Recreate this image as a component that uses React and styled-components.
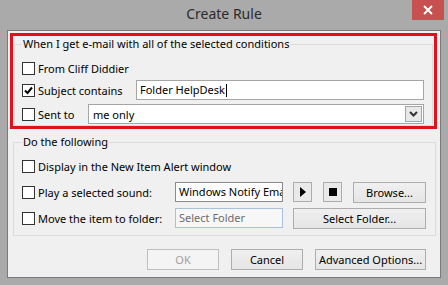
import React from "react";
import styled, { createGlobalStyle } from "styled-components";

const GlobalStyle = createGlobalStyle`
    html, body {
        margin: 0;
        padding: 0;
        background: #aaaaaa;
    }
    body {
        font-family: "Noto Sans", "Open Sans", sans-serif;
        font-size: 11px;
        color: #000;
    }
`;

const App = () => {
    return (
        <Window>
            <GlobalStyle />
            <TitleBar>
                <span />
                <Title>Create Rule</Title>
                <CloseButton>
                    <svg width="10" height="10" viewBox="0 0 10 10">
                        <path d="M1 1 L9 9 M9 1 L1 9" stroke="#fff" strokeWidth="2" />
                    </svg>
                </CloseButton>
            </TitleBar>
            <Client>
                <Highlight>
                    <Group $inset={7}>
                        <Legend>When I get e-mail with all of the selected conditions</Legend>
                        <Rows $gap={2}>
                            <Row>
                                <Check />
                                <Label>From Cliff Diddier</Label>
                            </Row>
                            <Row>
                                <Check checked />
                                <Label $w={98}>Subject contains</Label>
                                <TextBox>
                                    Folder HelpDesk<Caret />
                                </TextBox>
                            </Row>
                            <Row $top={2}>
                                <Check />
                                <Label $w={50}>Sent to</Label>
                                <Combo>
                                    <ComboText>me only</ComboText>
                                    <DropButton>
                                        <svg width="9" height="6" viewBox="0 0 9 6">
                                            <path d="M1 1 L4.5 4.5 L8 1" fill="none" stroke="#333" strokeWidth="2" />
                                        </svg>
                                    </DropButton>
                                </Combo>
                            </Row>
                        </Rows>
                    </Group>
                </Highlight>

                <Group $inset={8} $outer>
                    <Legend>Do the following</Legend>
                    <Rows $gap={6}>
                        <Row>
                            <Check />
                            <Label>Display in the New Item Alert window</Label>
                        </Row>
                        <Row>
                            <Check />
                            <Label $w={137}>Play a selected sound:</Label>
                            <TextBox $w={108} $clip>Windows Notify Email</TextBox>
                            <SmallButton>
                                <svg width="6" height="10" viewBox="0 0 6 10">
                                    <path d="M0 0 L6 5 L0 10 Z" fill="#000" />
                                </svg>
                            </SmallButton>
                            <SmallButton>
                                <svg width="8" height="8" viewBox="0 0 8 8">
                                    <rect width="8" height="8" fill="#000" />
                                </svg>
                            </SmallButton>
                            <Button $w={73}>Browse...</Button>
                        </Row>
                        <Row>
                            <Check />
                            <Label $w={137}>Move the item to folder:</Label>
                            <TextBox $w={108} $readonly>Select Folder</TextBox>
                            <Button $w={133}>Select Folder...</Button>
                        </Row>
                    </Rows>
                </Group>

                <Footer>
                    <Button $w={72} disabled>OK</Button>
                    <Button $w={72}>Cancel</Button>
                    <Button $w={111}>Advanced Options...</Button>
                </Footer>
            </Client>
        </Window>
    );
};

const Check = ({ checked }) => (
    <CheckBox>
        {checked && (
            <svg width="11" height="11" viewBox="0 0 11 11">
                <path d="M2 5.5 L4.5 8 L9 2.5" fill="none" stroke="#000" strokeWidth="2" />
            </svg>
        )}
    </CheckBox>
);

const Window = styled.div`
    width: 448px;
    height: 285px;
    background: #aaaaaa;
    display: flex;
    flex-direction: column;
`;

const TitleBar = styled.div`
    height: 30px;
    display: grid;
    grid-template-columns: 1fr auto 1fr;
    padding: 0 4px;
`;

const Title = styled.div`
    font-size: 14px;
    color: #2b2b2b;
    line-height: 28px;
`;

const CloseButton = styled.div`
    justify-self: end;
    width: 32px;
    height: 20px;
    background: #c75050;
    display: flex;
    align-items: center;
    justify-content: center;
`;

const Client = styled.div`
    margin: 0 7px;
    height: 248px;
    box-sizing: border-box;
    border: 1px solid #7a7a7a;
    background: #f0f0f0;
    padding-top: 2px;
`;

const Highlight = styled.div`
    margin: 0 3px 0 2px;
    border: 3px solid #e3101c;
    padding: 0 1px;
`;

const Group = styled.fieldset`
    margin: ${(p) => (p.$outer ? "5px 4px 0 5px" : "0")};
    border: 1px solid #dcdcdc;
    padding: 0 ${(p) => p.$inset + 1}px ${(p) => (p.$outer ? 7 : 1)}px ${(p) => p.$inset}px;
    min-width: 0;
`;

const Legend = styled.legend`
    padding: 0 1px;
    line-height: 16px;
    color: #000;
`;

const Rows = styled.div`
    display: flex;
    flex-direction: column;
    gap: ${(p) => p.$gap}px;
    padding-top: 6px;
`;

const Row = styled.div`
    display: flex;
    align-items: center;
    height: 20px;
    margin-top: ${(p) => p.$top || 0}px;
`;

const CheckBox = styled.div`
    width: 13px;
    height: 13px;
    box-sizing: border-box;
    border: 1px solid #333;
    background: #fff;
    display: flex;
    align-items: center;
    justify-content: center;
    flex-shrink: 0;
`;

const Label = styled.span`
    margin-left: 3px;
    white-space: nowrap;
    flex-shrink: 0;
    ${(p) => p.$w && `width: ${p.$w}px;`}
`;

const TextBox = styled.div`
    box-sizing: border-box;
    height: 20px;
    line-height: 18px;
    padding: 0 3px;
    white-space: nowrap;
    overflow: hidden;
    text-overflow: clip;
    ${(p) => (p.$w ? `width: ${p.$w}px; flex-shrink: 0;` : "flex: 1;")}
    border: 1px solid ${(p) => (p.$readonly ? "#a9c0dc" : p.$clip ? "#8a8a8a" : "#a5a5a5")};
    background: ${(p) => (p.$readonly ? "#f7f7f7" : "#fff")};
    color: ${(p) => (p.$readonly ? "#6d6d6d" : "#000")};
    margin-right: ${(p) => (p.$w ? "10px" : "0")};
`;

const Caret = styled.span`
    display: inline-block;
    width: 1px;
    height: 13px;
    background: #000;
    vertical-align: -3px;
    margin-left: 1px;
`;

const Combo = styled.div`
    flex: 1;
    box-sizing: border-box;
    height: 20px;
    border: 1px solid #a5a5a5;
    background: #fff;
    display: flex;
    align-items: center;
    padding: 0 1px 0 4px;
`;

const ComboText = styled.span`
    flex: 1;
`;

const DropButton = styled.div`
    width: 17px;
    height: 16px;
    box-sizing: border-box;
    border: 1px solid #a5a5a5;
    background: #e8e8e8;
    display: flex;
    align-items: center;
    justify-content: center;
`;

const SmallButton = styled.div`
    width: 19px;
    height: 20px;
    box-sizing: border-box;
    border: 1px solid #adadad;
    background: #e9e9e9;
    display: flex;
    align-items: center;
    justify-content: center;
    margin-right: 11px;
    flex-shrink: 0;
`;

const Button = styled.button`
    width: ${(p) => p.$w}px;
    height: 21px;
    box-sizing: border-box;
    border: 1px solid ${(p) => (p.disabled ? "#bfbfbf" : "#adadad")};
    background: ${(p) => (p.disabled ? "#f4f4f4" : "linear-gradient(#f0f0f0, #e5e5e5)")};
    color: ${(p) => (p.disabled ? "#a0a0a0" : "#000")};
    font-family: inherit;
    font-size: 11px;
    padding: 0;
    white-space: nowrap;
    flex-shrink: 0;
`;

const Footer = styled.div`
    display: flex;
    justify-content: flex-end;
    gap: 12px;
    padding: 13px 14px 0 0;
`;

export default App;
